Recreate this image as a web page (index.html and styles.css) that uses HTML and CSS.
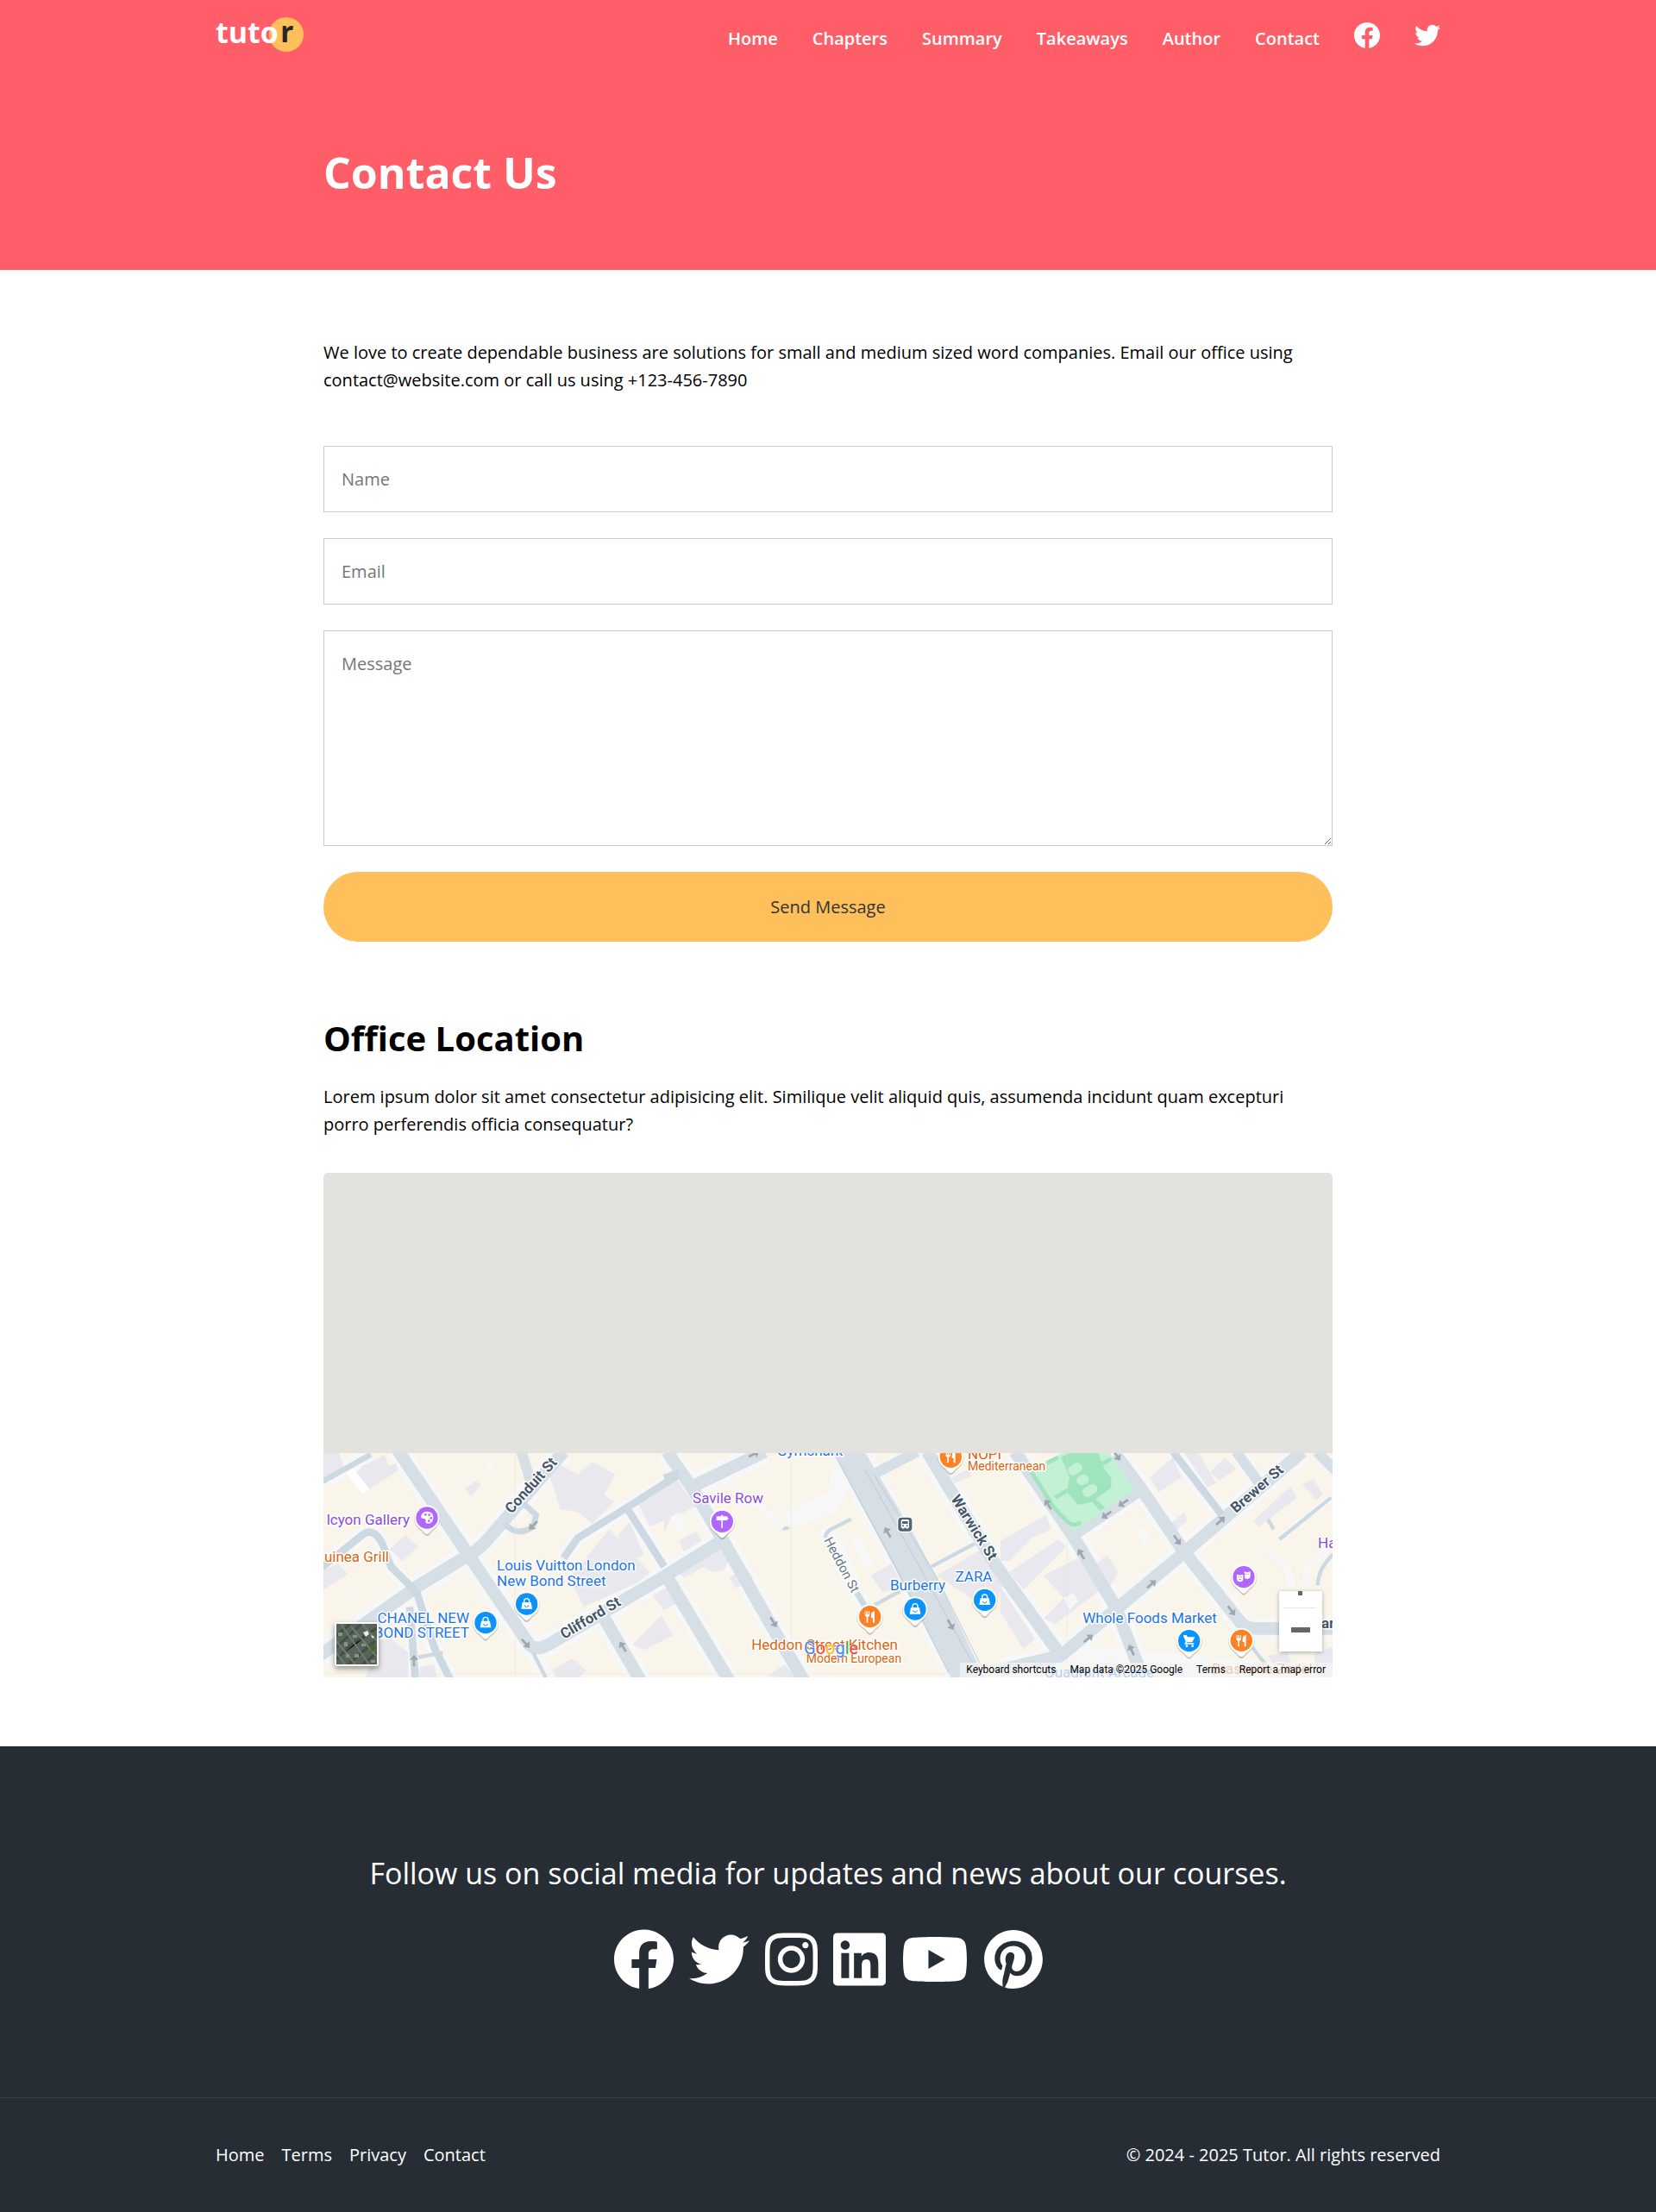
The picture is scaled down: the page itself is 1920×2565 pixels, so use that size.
FILE: index.html
```
<!DOCTYPE html>
<html lang="en">
<head>
<meta charset="utf-8">
<meta name="viewport" content="width=device-width, initial-scale=1">
<title>Contact Us - Tutor</title>
<link rel="stylesheet" href="styles.css">
</head>
<body>
<svg class="sprite" aria-hidden="true">
  <symbol id="facebook" viewBox="8 8 496 496"><path d="M504 256C504 119 393 8 256 8S8 119 8 256c0 123.78 90.69 226.38 209.25 245V327.69h-63V256h63v-54.64c0-62.15 37-96.48 93.67-96.48 27.14 0 55.52 4.84 55.52 4.84v61h-31.28c-30.8 0-40.41 19.12-40.41 38.73V256h68.78l-11 71.69h-57.78V501C413.31 482.38 504 379.78 504 256z"/></symbol>
  <symbol id="twitter" viewBox="0 0 512 512"><path d="M459.37 151.716c.325 4.548.325 9.097.325 13.645 0 138.72-105.583 298.558-298.558 298.558-59.452 0-114.68-17.219-161.137-47.106 8.447.974 16.568 1.299 25.34 1.299 49.055 0 94.213-16.568 130.274-44.832-46.132-.975-84.792-31.188-98.112-72.772 6.498.974 12.995 1.624 19.818 1.624 9.421 0 18.843-1.3 27.614-3.573-48.081-9.747-84.143-51.98-84.143-102.985v-1.299c13.969 7.797 30.214 12.67 47.431 13.319-28.264-18.843-46.781-51.005-46.781-87.391 0-19.492 5.197-37.36 14.294-52.954 51.655 63.675 129.3 105.258 216.365 109.807-1.624-7.797-2.599-15.918-2.599-24.04 0-57.828 46.782-104.934 104.934-104.934 30.213 0 57.502 12.67 76.67 33.137 23.715-4.548 46.456-13.32 66.599-25.34-7.798 24.366-24.366 44.833-46.132 57.827 21.117-2.273 41.584-8.122 60.426-16.243-14.292 20.791-32.161 39.308-52.628 54.253z"/></symbol>

  <symbol id="pin" viewBox="-60 -60 120 130" overflow="visible">
    <path d="M0 60C-6 60-10 54-18 44-34 32-45 20-45 0A45 45 0 0 1 45 0C45 20 34 32 18 44 10 54 6 60 0 60z" fill="#7d8288" opacity=".45" transform="translate(0 3)"/>
    <path d="M0 57C-6 57-10 50-18 42-34 32-44 20-44 0A44 44 0 0 1 44 0C44 20 34 32 18 42 10 50 6 57 0 57z" fill="#fff"/>
    <circle r="38" fill="currentColor"/>
  </symbol>
  <symbol id="bag" viewBox="-60 -60 120 130" overflow="visible"><path d="M-15-6h30l4 23h-38z" fill="#fff"/><path d="M-9-4v-6a9 9 0 0 1 18 0v6" fill="none" stroke="#fff" stroke-width="4"/><path d="M-7 4a7 6 0 0 0 14 0" fill="none" stroke="#0b93fb" stroke-width="3"/></symbol>
  <symbol id="fork" viewBox="-60 -60 120 130" overflow="visible"><path d="M-18-19v11q0 8 6 9v20h5V1q6-1 6-9v-11h-3v11h-3v-11h-3v11h-2v-11h-3v11h-2v-11zM16-19q-12 2-12 15v9h6v16h6z" fill="#fff"/></symbol>
  <symbol id="arrow" viewBox="-30 -30 60 60" overflow="visible"><path d="M-21-4H2v-11L20 0 2 15V4h-23z" fill="#9fa6ae"/></symbol>
</svg>

<header class="hero">
  <div class="container">
    <nav class="nav" aria-label="Main">
      <a class="logo" href="#" aria-label="tutor">
        <svg viewBox="0 0 102 40" width="102" height="40">
          <circle cx="82" cy="20" r="20" fill="#ffc05c"/>
          <text class="logo-text" x="0" y="30" fill="#fff">tuto</text>
          <text class="logo-text" x="75" y="29" fill="#262626">r</text>
        </svg>
      </a>
      <ul class="nav-links">
        <li><a href="#">Home</a></li>
        <li><a href="#">Chapters</a></li>
        <li><a href="#">Summary</a></li>
        <li><a href="#">Takeaways</a></li>
        <li><a href="#">Author</a></li>
        <li><a href="#">Contact</a></li>
        <li><a class="nav-icon" href="#" aria-label="Facebook"><svg width="30" height="30"><use href="#facebook"/></svg></a></li>
        <li><a class="nav-icon" href="#" aria-label="Twitter"><svg width="30" height="30"><use href="#twitter"/></svg></a></li>
      </ul>
    </nav>
    <h1 class="narrow">Contact Us</h1>
  </div>
</header>

<main class="container">
  <div class="narrow">
    <p>We love to create dependable business are solutions for small and medium sized word companies. Email our office using contact@website.com or call us using +123-456-7890</p>
    <form class="form">
      <input type="text" name="name" placeholder="Name" aria-label="Name">
      <input type="email" name="email" placeholder="Email" aria-label="Email">
      <textarea name="message" placeholder="Message" aria-label="Message"></textarea>
      <button type="submit">Send Message</button>
    </form>

    <h2>Office Location</h2>
    <p>Lorem ipsum dolor sit amet consectetur adipisicing elit. Similique velit aliquid quis, assumenda incidunt quam excepturi porro perferendis officia consequatur?</p>

    <div class="map">
      <svg class="map-tiles" viewBox="0 0 1170 585" role="img" aria-label="Street map around Savile Row">
        <rect width="1170" height="585" fill="#f9f5ea"/>
        <g transform="translate(-5 310) scale(.333333)">
          <!-- pavements -->
          <g fill="none" stroke="#f7f7f7" stroke-linejoin="round">
            <path stroke-width="80" d="M270 30 520 400 730 710Q755 735 800 710L1200 475 1400 350M850 40 600 330Q560 380 520 400L340 510 0 750M980 600 1120 840M1210 40 1300 170 1400 340 1570 640 1700 860M1200 460 1440 860M1300 160 1550 40M2115 40 2350 430 2580 750M2420 40 2620 330 2770 580 2870 840M2620 330 2860 170M2770 50 2860 170 3010 390 3210 640Q3230 655 3260 655H3560M3420 40 3010 390 2770 590 2580 750 2370 800M2570 750 2870 775 3530 830"/>
            <path stroke-width="54" d="M0 450 150 330Q190 300 220 360L250 440 340 530 400 720 460 840M315 580 335 830M850 410 900 340 1070 235 1250 120M1070 235 1200 440M2970 40 3140 260M3190 40 3270 150M3470 40 3540 110M745 740 790 830M1760 300 1870 540M1780 330 1900 590M1630 270 1800 200 1810 100M0 150 180 50"/>
            <path stroke-width="24" d="M3300 380 3370 450 3385 520M3340 345 3520 200M3430 510 3440 440 3530 360M2130 440 2280 360M1400 130 1620 300"/>
          </g>
          <path fill="#f7f7f7" d="M1770 45H1930L2330 830H2180z"/>
          <!-- buildings -->
          <g fill="#e8e8ee">
            <path d="M0 45H70L90 110 0 150zM150 90 230 50 240 90 270 80 275 105 175 170 130 115zM508 170 545 142 562 155 528 195zM800 120 830 80 900 120 950 75 1030 120 990 190 1025 215 950 290 900 250 840 240zM870 480 1010 310 1150 460 1110 495 920 580zM1040 330 1080 285 1130 400 1080 420zM1110 220 1200 160V280L1150 300zM0 460 65 430 100 465 0 530zM245 380 300 330 345 370 290 420zM1090 710 1190 610 1230 680 1130 730zM200 700 250 690 310 740V830H160zM350 790 400 780 410 830H350zM810 800 880 760 930 800 900 830H830zM1160 540 1250 490 1260 560 1200 590z"/>
            <path d="M1200 140 1240 130 1310 230 1270 250 1230 260 1200 320zM1252 350 1310 318 1330 350 1270 388zM1290 410 1340 375 1370 390 1385 365 1420 345 1455 410 1420 425 1410 450 1370 460 1340 440 1310 440zM1425 480 1480 440 1510 480 1450 515zM1255 465 1350 380 1355 430 1270 480zM1920 470 1990 430 2030 510 1960 530zM2150 470 2320 370 2380 500 2340 600zM2370 510 2490 690 2450 725 2370 600zM2370 350 2530 260 2545 310 2480 340 2400 420 2370 420zM2400 460 2570 345 2600 370 2450 520zM2520 470 2640 410 2720 520 2560 640 2520 620 2590 550zM2690 440 2740 400 2780 460 2750 510zM2890 130 2970 60 3000 130 2920 180zM3010 45H3060L3120 150 3090 165zM3100 110 3150 60 3190 100 3130 140zM2960 290 3010 250 3020 280 2980 315zM3250 280 3380 160 3400 200 3270 300zM3420 155 3460 135 3490 190 3470 210zM3300 750 3370 735 3380 780H3320zM3460 740 3540 715V830H3470zM1560 820 1620 780 1660 830zM2200 130 2260 100 2270 125 2210 150z"/>
          </g>
          <path fill="#fff" d="M95 115 120 100 175 170 150 185z"/>
          <g fill="#f7f7f7"><path d="M2840 320 2870 300 2900 350 2870 370zM580 100 600 60 615 70 595 108zM2590 550 2625 530 2640 560 2610 590zM1850 350 1880 330 1930 430 1900 450zM1560 310 1800 210 1810 250 1640 310zM1220 270 1250 250 1290 310 1260 340zM2730 210 2760 190 2770 230 2740 240zM100 520 115 510 120 530 105 538z"/></g>
          <!-- streets -->
          <g fill="none" stroke="#d6dfe6" stroke-linejoin="round">
            <path stroke-width="44" d="M270 30 520 400 730 710Q755 735 800 710L1200 475 1400 350M850 40 600 330Q560 380 520 400L340 510 0 750M980 600 1120 840M1210 40 1300 170 1400 340 1570 640 1700 860M1200 460 1440 860M1300 160 1550 40M2115 40 2350 430 2580 750M2420 40 2620 330 2770 580 2870 840M2620 330 2860 170M2770 50 2860 170 3010 390 3210 640Q3230 655 3260 655H3560M3420 40 3010 390 2770 590 2580 750 2370 800"/>
            <path stroke-width="36" d="M700 30 735 140M1935 115 2080 40M3190 40 3270 150M3470 40 3540 110"/>
          </g>
          <path fill="#d6dfe6" d="M1790 45H1900L2070 330 2160 500 2315 830H2200L2000 440z"/>
          <path fill="none" stroke="#bccad4" stroke-width="3" d="M1900 105 2060 390 2270 770M1930 120 2150 480 2310 800M1790 45 2000 430 2190 810"/>
          <g fill="none" stroke="#cdd9e2" stroke-linejoin="round">
            <path stroke-width="26" d="M0 450 150 330Q190 300 220 360L250 440 340 530 400 720 460 840M315 580 335 830M850 410 900 340 1070 235 1250 120M1070 235 1200 440M2970 40 3140 260"/>
            <path stroke-width="20" d="M0 150 180 50M645 290Q690 340 745 300L755 260 710 220M1870 530 1900 580M1200 130 1250 110"/>
            <path stroke-width="13" d="M745 740 790 830M345 755 430 740M1850 275 1780 310Q1762 320 1760 340M1930 575 2020 525M2130 440 2280 360M3340 345 3520 200M3300 275 3320 310M3540 385Q3475 440 3473 505M3245 720 3300 790"/>
          </g>
          <path d="M1612 315a13 13 0 0 1 26-6z" fill="#cdd9e2"/>
          <!-- Golden Square garden -->
          <path d="M2478 112 2580 45H2750L2835 170 2625 320z" fill="#c3f1d5"/>
          <path d="M2580 60 2610 45H2710L2730 100 2755 130V165L2700 205 2735 235 2715 245 2690 215 2640 225 2600 180 2610 130z" fill="#9fe4bd"/>
          <path d="M2478 112 2560 240 2610 290Q2630 300 2650 285M2560 200 2610 170M2710 90 2755 65M2570 60 2530 80" fill="none" stroke="#9fe4bd" stroke-width="14"/>
          <g stroke="#c3f1d5" stroke-width="34" stroke-linecap="round"><path d="M2622 105 2638 95M2652 140 2660 136M2672 180 2690 170"/></g>
          <path d="M682 45V830M1642 45V830M2602 45V830M0 812H3560" stroke="#e6e3da" stroke-width="2" opacity=".6"/>
          <!-- one-way arrows -->
          <use href="#arrow" x="-30" y="-30" width="60" height="60" transform="translate(744 297) rotate(135)"/>
          <use href="#arrow" x="-30" y="-30" width="60" height="60" transform="translate(719 708) rotate(48)"/>
          <use href="#arrow" x="-30" y="-30" width="60" height="60" transform="translate(330 766) rotate(-90)"/>
          <use href="#arrow" x="-30" y="-30" width="60" height="60" transform="translate(1056 718) rotate(-122)"/>
          <use href="#arrow" x="-30" y="-30" width="60" height="60" transform="translate(1513 48) rotate(-28)"/>
          <use href="#arrow" x="-30" y="-30" width="60" height="60" transform="translate(1581 634) rotate(58)"/>
          <use href="#arrow" x="-30" y="-30" width="60" height="60" transform="translate(1977 320) rotate(-120)"/>
          <use href="#arrow" x="-30" y="-30" width="60" height="60" transform="translate(2197 643) rotate(60)"/>
          <use href="#arrow" x="-30" y="-30" width="60" height="60" transform="translate(2535 223) rotate(-122)"/>
          <use href="#arrow" x="-30" y="-30" width="60" height="60" transform="translate(2650 396) rotate(-122)"/>
          <use href="#arrow" x="-30" y="-30" width="60" height="60" transform="translate(2775 55) rotate(55)"/>
          <use href="#arrow" x="-30" y="-30" width="60" height="60" transform="translate(2796 219) rotate(146)"/>
          <use href="#arrow" x="-30" y="-30" width="60" height="60" transform="translate(2738 260) rotate(146)"/>
          <use href="#arrow" x="-30" y="-30" width="60" height="60" transform="translate(2985 348) rotate(55)"/>
          <use href="#arrow" x="-30" y="-30" width="60" height="60" transform="translate(3136 280) rotate(-42)"/>
          <use href="#arrow" x="-30" y="-30" width="60" height="60" transform="translate(2896 500) rotate(-40)"/>
          <use href="#arrow" x="-30" y="-30" width="60" height="60" transform="translate(2676 689) rotate(-40)"/>
          <use href="#arrow" x="-30" y="-30" width="60" height="60" transform="translate(2825 729) rotate(-115)"/>
          <use href="#arrow" x="-30" y="-30" width="60" height="60" transform="translate(3174 594) rotate(53)"/>
          <!-- place markers -->
          <g color="#b066ff">
            <use href="#pin" x="315" y="210" width="120" height="130"/>
            <use href="#pin" x="1342" y="223" width="120" height="130"/>
            <use href="#pin" x="3156" y="416" width="120" height="130"/>
          </g>
          <g color="#0b93fb">
            <use href="#pin" x="662" y="510" width="120" height="130"/><use href="#bag" x="662" y="510" width="120" height="130"/>
            <use href="#pin" x="519" y="575" width="120" height="130"/><use href="#bag" x="519" y="575" width="120" height="130"/>
            <use href="#pin" x="2013" y="528" width="120" height="130"/><use href="#bag" x="2013" y="528" width="120" height="130"/>
            <use href="#pin" x="2255" y="496" width="120" height="130"/><use href="#bag" x="2255" y="496" width="120" height="130"/>
            <use href="#pin" x="2966" y="638" width="120" height="130"/>
          </g>
          <g color="#ff8126">
            <use href="#pin" x="2137" y="-2" width="120" height="130"/><use href="#fork" x="2137" y="-2" width="120" height="130"/>
            <use href="#pin" x="1856" y="554" width="120" height="130"/><use href="#fork" x="1856" y="554" width="120" height="130"/>
            <use href="#pin" x="3148" y="637" width="120" height="130"/><use href="#fork" x="3148" y="637" width="120" height="130"/>
          </g>
          <!-- palette, signpost, masks, trolley, bus -->
          <path d="M355 262Q362 245 382 249 399 254 397 272 395 290 378 290 367 289 371 278 372 272 362 273 353 273 355 262z" fill="#fff"/>
          <g fill="#b066ff"><circle cx="370" cy="259" r="4"/><circle cx="383" cy="260" r="4"/><circle cx="389" cy="271" r="4"/><circle cx="382" cy="281" r="4"/></g>
          <path d="M1399 260h5v5h14l6 7-6 7h-14v26h-5v-26h-17v-14h17z" fill="#fff"/>
          <path d="M3192 467q11 5 22 0v16q0 8-11 10-11-2-11-10zM3217 457q11 5 22 0v16q0 8-11 10-6-1-9-4v-15z" fill="#fff"/>
          <g fill="#b066ff"><circle cx="3199" cy="476" r="2"/><circle cx="3207" cy="476" r="2"/><circle cx="3224" cy="466" r="2"/><circle cx="3232" cy="466" r="2"/><path d="M3198 483h10l-5 4z"/></g>
          <path d="M3008 678h9l4 7h25l-9 18h-18l-2 3h26v4h-33l4-10-8-18h-1z" fill="#fff"/><circle cx="3018" cy="716" r="4" fill="#fff"/><circle cx="3038" cy="716" r="4" fill="#fff"/>
          <rect x="2010" y="265" width="56" height="56" rx="16" fill="#fff"/><rect x="2014" y="269" width="48" height="48" rx="12" fill="#4d6475"/>
          <path d="M2024 281q0-5 5-5h18q5 0 5 5v24h-5v4h-4v-4h-10v4h-4v-4h-5zM2028 282v9h20v-9z" fill="#fff" fill-rule="evenodd"/>
          <g fill="#4d6475"><circle cx="2031" cy="298" r="3"/><circle cx="2045" cy="298" r="3"/></g>
        </g>

        <g class="place violet">
          <text x="100" y="408" text-anchor="end">lcyon Gallery</text>
          <text x="469" y="383" text-anchor="middle">Savile Row</text>
          <text x="1153" y="435">Ha</text>
        </g>
        <g class="place blue">
          <text x="201" y="461">Louis Vuitton London</text>
          <text x="201" y="479">New Bond Street</text>
          <text x="169" y="522" text-anchor="end">CHANEL NEW</text>
          <text x="169" y="539" text-anchor="end">BOND STREET</text>
          <text x="564" y="328" text-anchor="middle">Gymshark</text>
          <text x="689" y="484" text-anchor="middle">Burberry</text>
          <text x="754" y="474" text-anchor="middle">ZARA</text>
          <text x="958" y="522" text-anchor="middle">Whole Foods Market</text>
          <text x="836" y="585">Quadrant Arcade</text>
        </g>
        <g class="place orange">
          <text x="76" y="451" text-anchor="end">uinea Grill</text>
          <text x="747" y="332">NOPI</text>
          <text class="small" x="747" y="345">Mediterranean</text>
          <text x="581" y="553" text-anchor="middle">Heddon Street Kitchen</text>
          <text class="small" x="615" y="568" text-anchor="middle">Modern European</text>
          <text x="1030" y="581">Brasserie Zedel</text>
        </g>
        <g class="place street">
          <text transform="translate(218 396) rotate(-48)">Conduit St</text>
          <text transform="translate(279 541) rotate(-31)">Clifford St</text>
          <text transform="translate(727 378) rotate(58)">Warwick St</text>
          <text transform="translate(1058 395) rotate(-41)">Brewer St</text>
          <text x="1157" y="528">ar</text>
          <text class="lane" transform="translate(580 426) rotate(62)">Heddon St</text>
        </g>
        <text class="map-brand" x="557" y="558"><tspan fill="#4285f4">G</tspan><tspan fill="#ea4335">o</tspan><tspan fill="#fbbc05">o</tspan><tspan fill="#4285f4">g</tspan><tspan fill="#34a853">l</tspan><tspan fill="#ea4335">e</tspan></text>
        <rect width="1170" height="325" fill="#e4e2de"/>
      </svg>
      <button class="map-layer" type="button" aria-label="Show satellite imagery">
        <svg viewBox="0 0 47 47" width="47" height="47">
          <rect width="47" height="47" fill="#56645a"/>
          <path d="M0 14 16 0M0 27 29 0M0 41 20 22 47 5M14 47 47 18M30 47 47 34" stroke="#434f46" stroke-width="3"/>
          <path d="M5 0 26 30 38 47M17 3 47 38M0 20 22 47M0 33 10 47M30 0 47 20" stroke="#6d7b71" stroke-width="2"/>
          <path d="M2 10h5v4H2zM9 21h4v5H9zM19 13h5v3h-5zM21 35h5v4h-5zM29 23h5v3h-5zM11 35h4v4h-4zM40 42h5v3h-5z" fill="#87927f"/>
          <path d="M31 10l5-2 2 4-4 3zM40 13l4 2-2 2z" fill="#eceeea"/><path d="M38 26l5-2 3 4-5 4z" fill="#3d6a26"/>
        </svg>
      </button>
      <button class="map-zoom" type="button" aria-label="Zoom out">
        <svg viewBox="0 0 50 70" width="50" height="70"><path d="M22 0h5v5h-5zM14 42h22v6H14z" fill="#666"/><path d="M6 19h37v1H6z" fill="#e6e6e6"/></svg>
      </button>
      <div class="map-legal">
        <a href="#">Keyboard shortcuts</a>
        <span>Map data ©2025 Google</span>
        <a href="#">Terms</a>
        <a href="#">Report a map error</a>
      </div>
    </div>
  </div>
</main>

<footer class="footer">
  <div class="container follow">
    <p>Follow us on social media for updates and news about our courses.</p>
    <div class="social">
      <a href="#" aria-label="Facebook"><svg width="69" height="70"><use href="#facebook"/></svg></a>
      <a href="#" aria-label="Twitter"><svg width="70" height="70"><use href="#twitter"/></svg></a>
      <a href="#" aria-label="Instagram"><svg viewBox="0 0 448 512" width="61" height="70"><path d="M224.1 141c-63.6 0-114.9 51.3-114.9 114.9s51.3 114.9 114.9 114.9S339 319.5 339 255.9 287.7 141 224.1 141zm0 189.6c-41.1 0-74.7-33.5-74.7-74.7s33.5-74.7 74.7-74.7 74.7 33.5 74.7 74.7-33.6 74.7-74.7 74.7zm146.4-194.3c0 14.9-12 26.8-26.8 26.8-14.9 0-26.8-12-26.8-26.8s12-26.8 26.8-26.8 26.8 12 26.8 26.8zm76.1 27.2c-1.7-35.9-9.9-67.7-36.2-93.9-26.2-26.2-58-34.4-93.9-36.2-37-2.1-147.9-2.1-184.9 0-35.8 1.7-67.6 9.9-93.9 36.1s-34.4 58-36.2 93.9c-2.1 37-2.1 147.9 0 184.9 1.7 35.9 9.9 67.7 36.2 93.9s58 34.4 93.9 36.2c37 2.1 147.9 2.1 184.9 0 35.9-1.7 67.7-9.9 93.9-36.2 26.2-26.2 34.4-58 36.2-93.9 2.1-37 2.1-147.8 0-184.8zM398.8 388c-7.8 19.6-22.9 34.7-42.6 42.6-29.5 11.7-99.5 9-132.1 9s-102.7 2.6-132.1-9c-19.6-7.8-34.7-22.9-42.6-42.6-11.7-29.5-9-99.5-9-132.1s-2.6-102.7 9-132.1c7.8-19.6 22.9-34.7 42.6-42.6 29.5-11.7 99.5-9 132.1-9s102.7-2.6 132.1 9c19.6 7.8 34.7 22.9 42.6 42.6 11.7 29.5 9 99.5 9 132.1s2.7 102.7-9 132.1z"/></svg></a>
      <a href="#" aria-label="LinkedIn"><svg viewBox="0 0 448 512" width="61" height="70"><path d="M416 32H31.9C14.3 32 0 46.5 0 64.3v383.4C0 465.5 14.3 480 31.9 480H416c17.6 0 32-14.5 32-32.3V64.3c0-17.8-14.4-32.3-32-32.3zM135.4 416H69V202.2h66.5V416zm-33.2-243c-21.3 0-38.5-17.3-38.5-38.5S80.9 96 102.2 96c21.2 0 38.5 17.3 38.5 38.5 0 21.3-17.2 38.5-38.5 38.5zm282.1 243h-66.4V312c0-24.8-.5-56.7-34.5-56.7-34.6 0-39.9 27-39.9 54.9V416h-66.4V202.2h63.7v29.2h.9c8.9-16.8 30.6-34.5 62.9-34.5 67.2 0 79.7 44.3 79.7 101.9V416z"/></svg></a>
      <a href="#" aria-label="YouTube"><svg viewBox="0 0 576 512" width="78" height="70"><path d="M549.655 124.083c-6.281-23.65-24.787-42.276-48.284-48.597C458.781 64 288 64 288 64S117.22 64 74.629 75.486c-23.497 6.322-42.003 24.947-48.284 48.597-11.412 42.867-11.412 132.305-11.412 132.305s0 89.438 11.412 132.305c6.281 23.65 24.787 41.5 48.284 47.821C117.22 448 288 448 288 448s170.78 0 213.371-11.486c23.497-6.321 42.003-24.171 48.284-47.821 11.412-42.867 11.412-132.305 11.412-132.305s0-89.438-11.412-132.305zm-317.51 213.508V175.185l142.739 81.205-142.739 81.201z"/></svg></a>
      <a href="#" aria-label="Pinterest"><svg viewBox="0 0 496 512" width="68" height="70"><path d="M496 256c0 137-111 248-248 248-25.6 0-50.2-3.9-73.4-11.1 10.1-16.5 25.2-43.5 30.8-65 3-11.6 15.4-59 15.4-59 8.1 15.4 31.7 28.5 56.8 28.5 74.8 0 128.7-68.8 128.7-154.3 0-81.9-66.9-143.2-152.9-143.2-107 0-163.9 71.8-163.9 150.1 0 36.4 19.4 81.7 50.3 96.1 4.7 2.2 7.2 1.2 8.3-3.3.8-3.4 5-20.3 6.9-28.1.6-2.5.3-4.7-1.7-7.1-10.1-12.5-18.3-35.3-18.3-56.6 0-54.7 41.4-107.6 112-107.6 60.9 0 103.6 41.5 103.6 100.9 0 67.1-33.9 113.6-78 113.6-24.3 0-42.6-20.1-36.7-44.8 7-29.5 20.5-61.3 20.5-82.6 0-19-10.2-34.9-31.4-34.9-24.9 0-44.9 25.7-44.9 60.2 0 22 7.4 36.8 7.4 36.8s-24.5 103.8-29 123.2c-5 21.4-3 51.6-.9 71.2C65.4 450.9 0 361.1 0 256 0 119 111 8 248 8s248 111 248 248z"/></svg></a>
    </div>
  </div>
  <div class="footer-bottom">
    <div class="container footer-row">
      <nav class="footer-links" aria-label="Footer">
        <a href="#">Home</a>
        <a href="#">Terms</a>
        <a href="#">Privacy</a>
        <a href="#">Contact</a>
      </nav>
      <p>© 2024 - 2025 Tutor. All rights reserved</p>
    </div>
  </div>
</footer>
</body>
</html>
```

FILE: styles.css
```
*, *::before, *::after { box-sizing: border-box; }

body {
  margin: 0;
  font: 20px/32px "Open Sans", "Noto Sans", sans-serif;
  color: #000;
  background: #fff;
}

h1, h2, p, ul { margin: 0; padding: 0; }
a { color: inherit; text-decoration: none; }
svg { display: block; fill: currentColor; }

.sprite { position: absolute; width: 0; height: 0; }

.container {
  width: 100%;
  max-width: 1460px;
  margin: 0 auto;
  padding: 0 20px;
}

.narrow { max-width: 1170px; margin: 0 auto; }

/* Header */
.hero {
  padding: 20px 0 83px;
  color: #fff;
  background: #ff5e68;
}

.nav {
  display: flex;
  justify-content: space-between;
  align-items: flex-start;
}

.logo svg { overflow: visible; }
.logo-text { font: 700 34px "Open Sans", sans-serif; }

.nav-links {
  display: flex;
  align-items: flex-start;
  gap: 40px;
  padding-top: 6px;
  list-style: none;
  font-weight: 600;
  line-height: 38px;
}

.nav-icon { display: block; }

h1 {
  font-size: 50px;
  line-height: 60px;
}
.hero h1 { margin-top: 106px; }

/* Contact form */
main.container { padding-top: 80px; padding-bottom: 80px; }

.form {
  display: flex;
  flex-direction: column;
  gap: 30px;
  margin-top: 60px;
}

.form input,
.form textarea {
  display: block;
  width: 100%;
  padding: 24px 20px;
  border: 1px solid #ccc;
  border-radius: 0;
  font: 20px "Open Sans", sans-serif;
  color: #333;
  background: #fff;
}
.form input { height: 77px; }
.form textarea { height: 250px; }
.form ::placeholder { color: #757575; }

.form button {
  padding: 24px 40px;
  border: 0;
  border-radius: 40px;
  font: 20px/33px "Open Sans", sans-serif;
  color: #333;
  background: #ffc05c;
}

/* Office location */
h2 {
  margin: 88px 0 28px;
  font-size: 40px;
  line-height: 48px;
}

.map {
  position: relative;
  margin-top: 40px;
  overflow: hidden;
  border-radius: 5px;
  font-family: Roboto, sans-serif;
}
.map-tiles { width: 100%; height: auto; }

.place {
  font-size: 17px;
  stroke: #fff;
  stroke-width: 3px;
  stroke-linejoin: round;
  paint-order: stroke;
}
.place .small { font-size: 14px; }
.violet { fill: #8c4adb; }
.blue { fill: #1f74e8; }
.orange { fill: #d9660f; }
.street { fill: #45566a; font-weight: 700; }
.street .lane { font-size: 15px; font-weight: 400; fill: #6b7785; }
.map-brand { font-size: 20px; stroke: #fff; stroke-width: 1px; paint-order: stroke; }

.map-layer {
  position: absolute;
  left: 13px;
  bottom: 13px;
  padding: 0;
  border: 2px solid #fff;
  border-radius: 3px;
  background: #fff;
  box-shadow: 0 3px 6px rgba(0, 0, 0, .4);
}
.map-zoom {
  position: absolute;
  right: 12px;
  bottom: 30px;
  padding: 0;
  border: 0;
  background: #fff;
  box-shadow: 0 1px 5px rgba(0, 0, 0, .3);
}
.map-legal {
  position: absolute;
  right: 0;
  bottom: 0;
  display: flex;
  gap: 16px;
  padding: 0 8px 0 7px;
  font-size: 12px;
  line-height: 17px;
  color: #000;
  background: rgba(245, 245, 245, .7);
}

/* Footer */
.footer { color: #fff; background: #262d35; }

.follow {
  padding-top: 121px;
  padding-bottom: 125px;
  text-align: center;
}
.follow p { font-size: 34px; line-height: 52px; }

.social {
  display: flex;
  flex-wrap: wrap;
  justify-content: center;
  gap: 18px;
  margin-top: 39px;
}

.footer-bottom { padding: 50px 0; border-top: 1px solid #33404d; }

.footer-row {
  display: flex;
  flex-wrap: wrap;
  justify-content: space-between;
  gap: 20px;
}
.footer-links { display: flex; gap: 20px; }
```
